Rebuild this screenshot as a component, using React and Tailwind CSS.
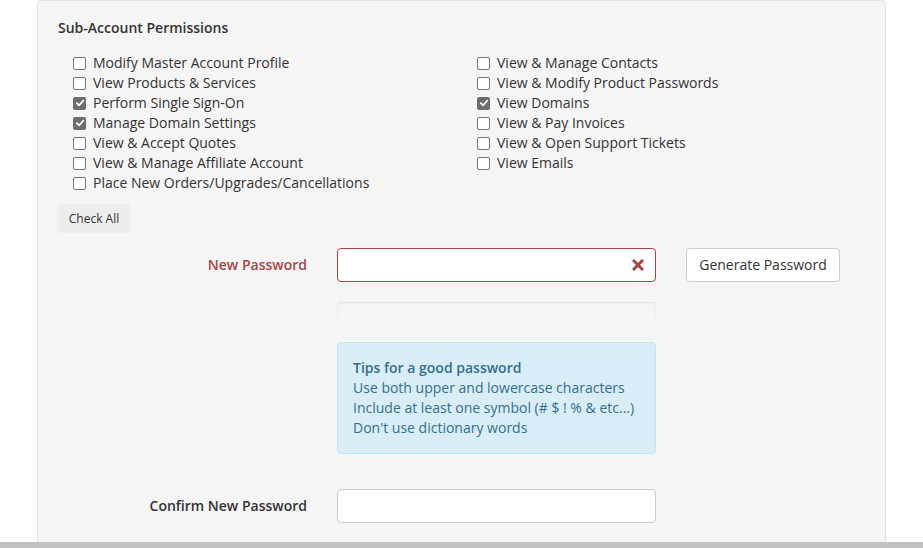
import React from "react";

const leftPerms = [
  { label: "Modify Master Account Profile", checked: false },
  { label: "View Products & Services", checked: false },
  { label: "Perform Single Sign-On", checked: true },
  { label: "Manage Domain Settings", checked: true },
  { label: "View & Accept Quotes", checked: false },
  { label: "View & Manage Affiliate Account", checked: false },
  { label: "Place New Orders/Upgrades/Cancellations", checked: false },
];

const rightPerms = [
  { label: "View & Manage Contacts", checked: false },
  { label: "View & Modify Product Passwords", checked: false },
  { label: "View Domains", checked: true },
  { label: "View & Pay Invoices", checked: false },
  { label: "View & Open Support Tickets", checked: false },
  { label: "View Emails", checked: false },
];

// native-looking checkbox
const Box = ({ checked }) =>
  checked ? (
    <span className="w-[13px] h-[13px] rounded-[2px] bg-[#6d6d6d] flex items-center justify-center shrink-0">
      <svg width="10" height="10" viewBox="0 0 10 10">
        <path d="M1.8 5.2 L4 7.4 L8.3 2.6" fill="none" stroke="#fff" strokeWidth="1.7" strokeLinecap="round" strokeLinejoin="round" />
      </svg>
    </span>
  ) : (
    <span className="w-[13px] h-[13px] rounded-[2px] border border-[#767676] bg-white shrink-0"></span>
  );

const PermList = ({ items }) => (
  <div className="flex flex-col">
    {items.map((p) => (
      <label key={p.label} className="flex items-center gap-[7px] h-5">
        <Box checked={p.checked} />
        <span>{p.label}</span>
      </label>
    ))}
  </div>
);

export default function App() {
  return (
    <div className="w-[923px] h-[548px] bg-white overflow-hidden flex flex-col text-[14px] text-[#333] leading-5" style={{ fontFamily: '"Open Sans", "Liberation Sans", sans-serif' }}>
      <div className="flex-1 ml-[37px] w-[849px] bg-[#f5f5f5] border-x border-t border-[#e3e3e3] rounded-t-[4px] px-5 pt-[17px]">
        {/* permissions */}
        <h3 className="font-semibold text-[14px] leading-5">Sub-Account Permissions</h3>
        <div className="flex mt-[15px] pl-[15px]">
          <div className="w-[404px]">
            <PermList items={leftPerms} />
          </div>
          <PermList items={rightPerms} />
        </div>
        <button type="button" className="mt-[11px] h-[29px] w-[72px] bg-[#ededed] rounded-[3px] text-[12px] text-[#333]">Check All</button>

        {/* new password */}
        <div className="flex items-center mt-[15px]">
          <div className="w-[249px] text-right font-semibold text-[#a94442]">New Password</div>
          <div className="ml-[30px] w-[319px] h-[34px] bg-white border border-[#a94442] rounded-[4px] flex items-center justify-end pr-[11px]">
            <svg width="12" height="12" viewBox="0 0 12 12">
              <path d="M2 2 L10 10 M10 2 L2 10" stroke="#a94442" strokeWidth="3" strokeLinecap="square" />
            </svg>
          </div>
          <button type="button" className="ml-[30px] h-[34px] w-[154px] bg-white border border-[#ccc] rounded-[4px] text-[#333]">Generate Password</button>
        </div>

        <div className="ml-[279px] mt-[20px] w-[319px] h-5 bg-[#f5f5f5] rounded-[4px] shadow-[inset_0_1px_2px_rgba(0,0,0,0.1)]"></div>

        <div className="ml-[279px] mt-[20px] w-[319px] bg-[#d9edf7] border border-[#bce8f1] rounded-[4px] p-[15px] text-[#31708f]">
          <div className="font-semibold">Tips for a good password</div>
          <div>Use both upper and lowercase characters</div>
          <div>Include at least one symbol (# $ ! % &amp; etc...)</div>
          <div>Don't use dictionary words</div>
        </div>

        {/* confirm */}
        <div className="flex items-center mt-[35px]">
          <div className="w-[249px] text-right font-semibold">Confirm New Password</div>
          <div className="ml-[30px] w-[319px] h-[34px] bg-white border border-[#ccc] rounded-[4px]"></div>
        </div>
      </div>
      <div className="h-[6px] bg-[#c1c1c1] shrink-0"></div>
    </div>
  );
}
